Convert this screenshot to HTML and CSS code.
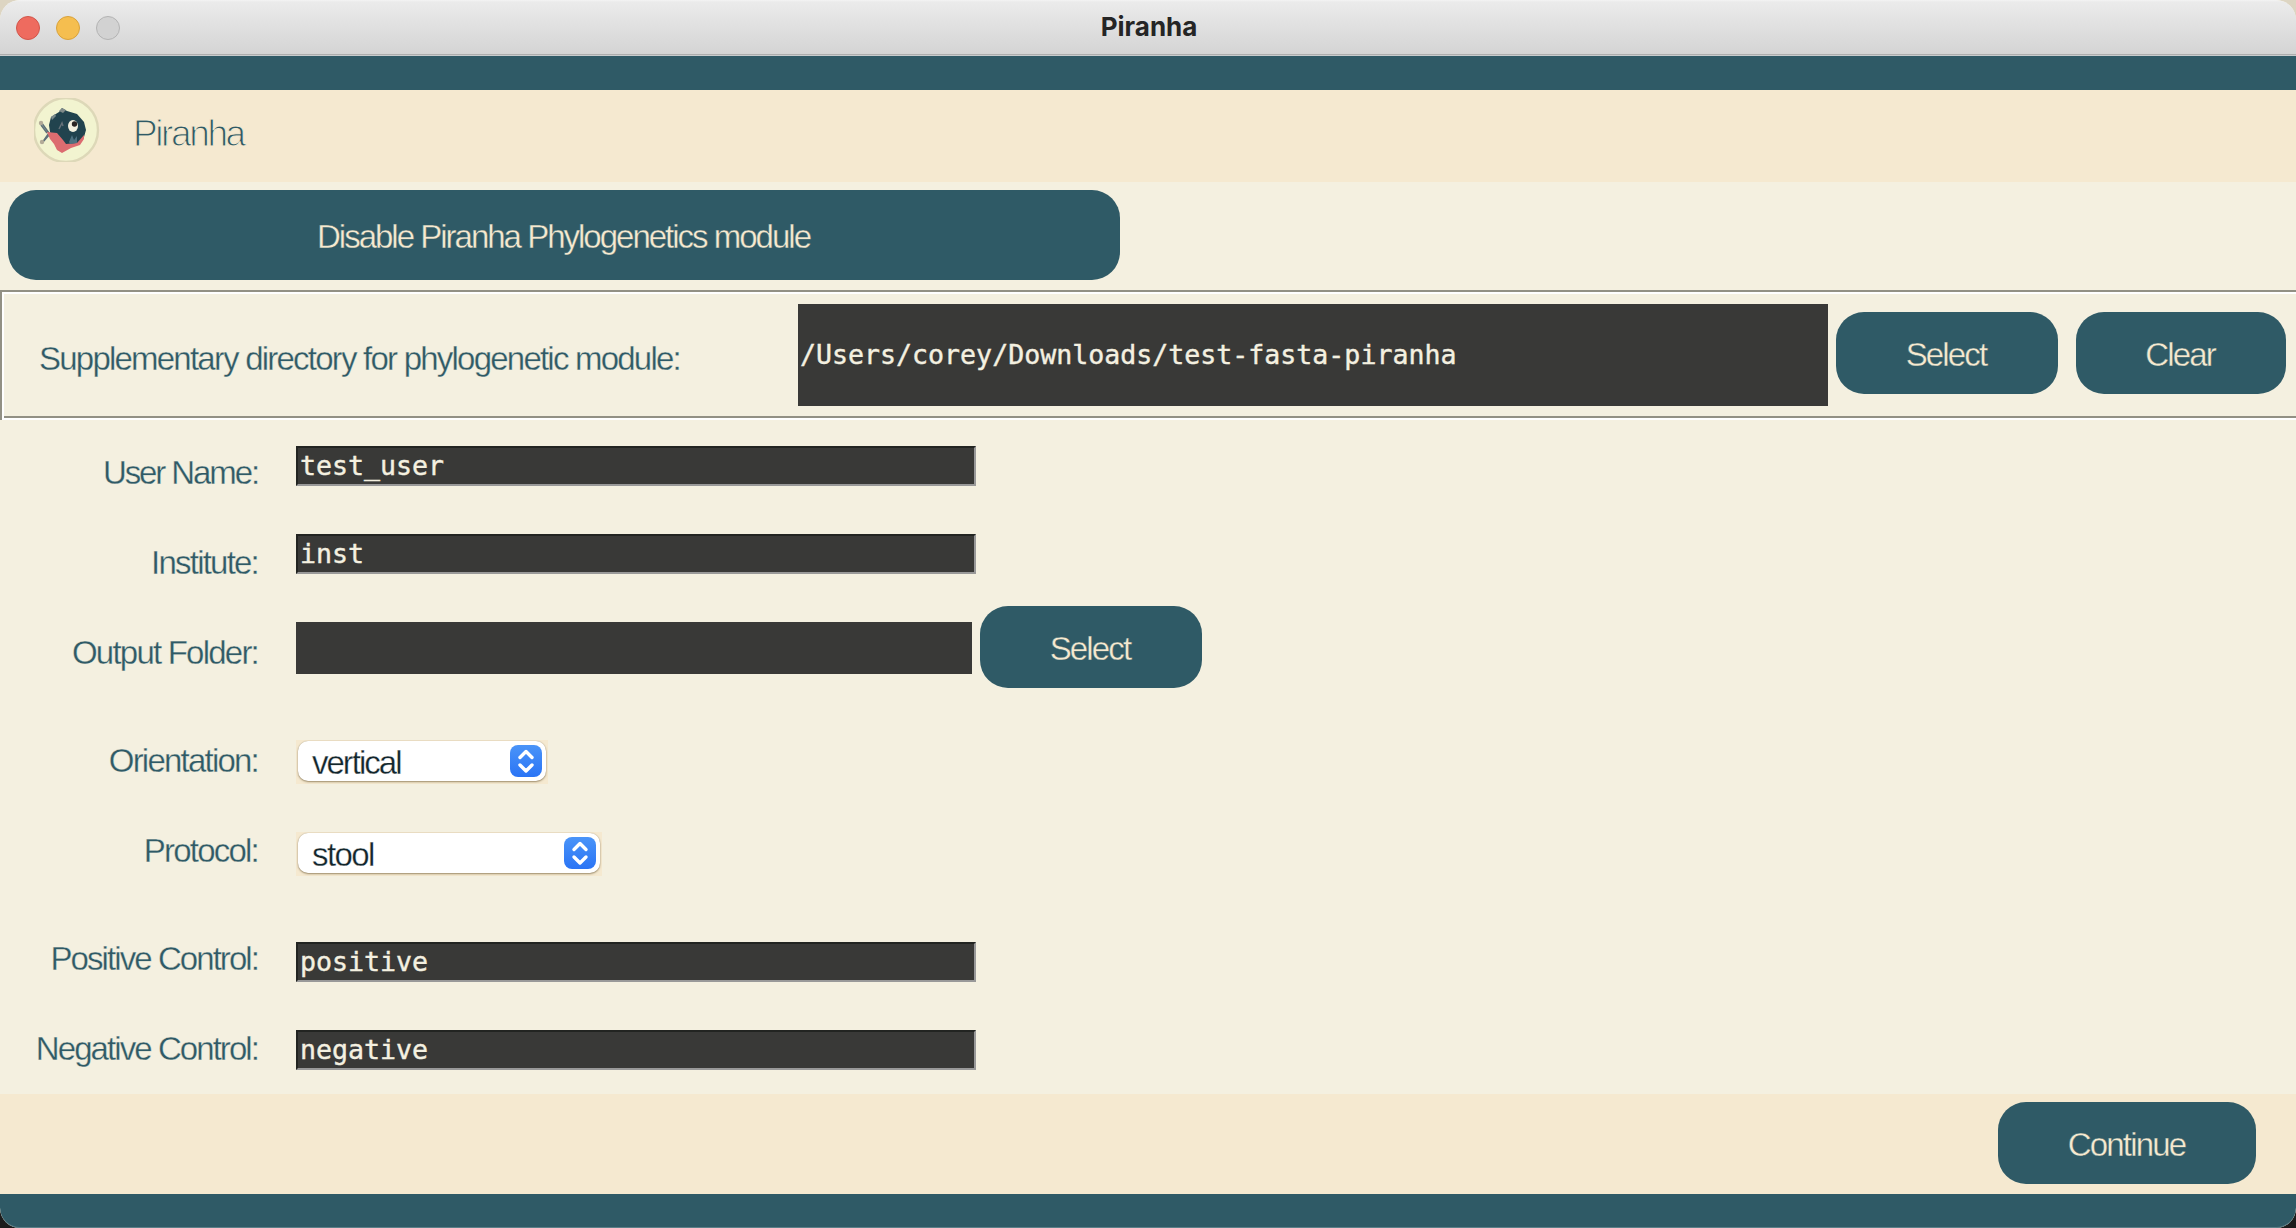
FILE: index.html
```
<!DOCTYPE html>
<html lang="en">
<head>
<meta charset="utf-8">
<title>Piranha</title>
<link rel="stylesheet" href="styles.css">
</head>
<body>
<div class="window">
  <div class="titlebar">
    <div class="lights">
      <span class="light light-close"></span>
      <span class="light light-min"></span>
      <span class="light light-zoom"></span>
    </div>
    <div class="window-title">Piranha</div>
    <div></div>
  </div>
  <div class="band"></div>
  <header class="header">
    <svg class="logo" width="66" height="64" viewBox="0 0 66 64">
      <circle cx="32" cy="32" r="32" fill="#f2f4d0" stroke="#ddd8b8" stroke-width="2.4"/>
      <path d="M7 24l8 11-7 10M7 27l6 8M8 45l8-9" fill="none" stroke="#5d7078" stroke-width="1.5"/>
      <circle cx="7" cy="25" r="2.2" fill="#b3ab98"/>
      <circle cx="8" cy="44" r="2.2" fill="#b3ab98"/>
      <path d="M17 19l8-5 3-4 5 3 10 3 7 8 2 8-2 7-5 6-14 3-12-7-3-7-1-7z" fill="#21434e"/>
      <path d="M25 13l3-3 4 2-3 3z" fill="#7f8a89"/>
      <path d="M17 19l4-3 1 2-4 4z" fill="#78898b"/>
      <path d="M13 34l10 1 6 7 3 4 11-1 7-8 0 4-4 6-9 3-9 5-5-3-3-6-4-5z" fill="#dc6c70"/>
      <path d="M35 44l3-7 2 5 3-4 0 7-7 1z" fill="#4e7180"/>
      <path d="M25 31l3-6 1 3" fill="none" stroke="#647078" stroke-width="1.5"/>
      <ellipse cx="39" cy="28" rx="5" ry="6" fill="#f3f1df"/>
      <circle cx="40.500" cy="26" r="2.700" fill="#2a2523"/>
    </svg>
    <h1 class="app-name">Piranha</h1>
  </header>
  <main class="content">
    <button class="btn btn-wide">Disable Piranha Phylogenetics module</button>
    <section class="frame">
      <div class="frame-inner">
        <span class="label frame-label">Supplementary directory for phylogenetic module:</span>
        <div class="path">/Users/corey/Downloads/test-fasta-piranha</div>
        <button class="btn btn-select">Select</button>
        <button class="btn btn-clear">Clear</button>
      </div>
    </section>
    <form class="form">
      <div class="row"><span class="label user-label">User Name:</span><div class="entry user">test_user</div></div>
      <div class="row"><span class="label">Institute:</span><div class="entry institute">inst</div></div>
      <div class="row group-end">
        <span class="label">Output Folder:</span>
        <div class="folder"><div class="folder-path"></div><button type="button" class="btn btn-select">Select</button></div>
      </div>
      <div class="row">
        <span class="label">Orientation:</span>
        <div class="menu menu-orientation"><div class="menu-box"><span class="menu-value">vertical</span>
          <svg class="stepper" width="32" height="32" viewBox="0 0 32 32"><path d="M10 12.500L16 6.500l6 6M10 20L16 26l6-6"/></svg></div></div>
      </div>
      <div class="row group-end">
        <span class="label">Protocol:</span>
        <div class="menu menu-protocol"><div class="menu-box"><span class="menu-value menu-value-short">stool</span>
          <svg class="stepper" width="32" height="32" viewBox="0 0 32 32"><path d="M10 12.500L16 6.500l6 6M10 20L16 26l6-6"/></svg></div></div>
      </div>
      <div class="row"><span class="label control-label">Positive Control:</span><div class="entry positive">positive</div></div>
      <div class="row"><span class="label control-label">Negative Control:</span><div class="entry negative">negative</div></div>
    </form>
  </main>
  <footer class="footer"><button class="btn btn-continue">Continue</button></footer>
  <div class="band band-bottom"></div>
</div>
</body>
</html>
```
FILE: styles.css
```
:root {
  --teal: #2f5a66;
  --cream: #f4f0e0;
  --beige: #f5e9d0;
  --field: #393937;
}
* { box-sizing: border-box; }
html { background: linear-gradient(#ddd5c2 50%, #1c1c1c 50%); }
body {
  margin: 0;
  font: 400 33px/36px "Liberation Sans", Arial, sans-serif;
  color: var(--teal);
}
.window {
  width: 2296px;
  height: 1228px;
  border-radius: 20px;
  overflow: hidden;
  background: var(--cream);
  display: flex;
  flex-direction: column;
}

/* title bar */
.titlebar {
  height: 56px;
  flex: none;
  display: grid;
  grid-template-columns: 1fr auto 1fr;
  align-items: center;
  background: linear-gradient(#f4f4f4 0, #ebebeb 2px, #d4d4d4 54px);
  border-bottom: 1px solid #c9cccd;
  box-shadow: inset 0 -1px #adadad;
}
.lights { display: flex; gap: 16px; padding-left: 16px; }
.light { width: 24px; height: 24px; border-radius: 50%; border: 1px solid; }
.light-close { background: #ee6b5f; border-color: #d1564b; }
.light-min { background: #f5be4f; border-color: #d8a23c; }
.light-zoom { background: #d2d2d2; border-color: #b3b3b3; }
.window-title { font: 700 26px/52px Inter, sans-serif; padding: 0 0 2px 2px; color: #252525; }

.band { height: 34px; flex: none; background: var(--teal); }
.band-bottom {
  border-radius: 0 0 20px 20px;
  box-shadow: inset 0 -1px #5c7f88;
}

/* header */
.header {
  height: 92px;
  flex: none;
  display: flex;
  align-items: flex-start;
  padding: 8px 0 0 34px;
  background: var(--beige);
}
.app-name {
  margin: 0 0 0 33px;
  font-size: 37px;
  font-weight: 400;
  line-height: 71px;
  letter-spacing: -2.4px;
  -webkit-text-stroke: 1.1px var(--beige);
}

/* buttons */
.btn {
  flex: none;
  height: 82px;
  border: 0;
  border-radius: 28px;
  padding: 4px 2px 0 0;
  background: var(--teal);
  color: var(--beige);
  font: inherit;
  letter-spacing: -1.85px;
  -webkit-text-stroke: .35px var(--teal);
}
.btn-wide { width: 1112px; height: 90px; margin: 8px 0 10px 8px; padding-right: 1px; letter-spacing: -2px; }
.btn-select { width: 222px; }
.btn-clear { width: 210px; margin-left: 18px; }
.btn-continue { width: 258px; padding-right: 1px; }

.content { flex: 1; display: flex; flex-direction: column; align-items: flex-start; }
.label { letter-spacing: -1.78px; -webkit-text-stroke: .3px var(--cream); white-space: nowrap; }
.control-label { letter-spacing: -1.93px; }
.user-label { letter-spacing: -2.1px; }

/* grooved frame */
.frame {
  width: 2296px;
  height: 130px;
  border: solid #929084;
  border-width: 2px 0 0 2px;
}
.frame-inner {
  height: 128px;
  border: 2px solid #fff;
  border-right: 0;
  display: flex;
  align-items: center;
  padding-bottom: 2px;
  box-shadow: inset 0 -2px #929084;
}
.frame-inner .btn { margin-bottom: 4px; }
.frame-label { width: 758px; padding: 8px 0 0 35px; }
.path {
  width: 1030px;
  height: 102px;
  margin: 0 8px 0 36px;
  padding-left: 2px;
  background: var(--field);
}
.path, .entry {
  color: var(--cream);
  font: 26.6px/36px "DejaVu Sans Mono", monospace;
  -webkit-text-stroke: .4px var(--cream);
}
.path { line-height: 101px; }

/* form rows */
.form { padding-top: 8px; }
.row { display: grid; grid-template-columns: 258px auto; column-gap: 38px; height: 90px; align-items: start; }
.row > .label { text-align: right; line-height: 90px; }
.group-end { margin-bottom: 18px; }
.entry {
  width: 680px;
  height: 40px;
  padding-left: 2px;
  border: 2px solid #222421;
  border-right-color: #999;
  border-bottom-color: #999;
  background: var(--field);
}
.user { margin-top: 18px; }
.institute { margin-top: 16px; }
.positive { margin-top: 28px; }
.negative { margin-top: 26px; }
.folder { display: flex; gap: 8px; margin-top: -2px; }
.folder-path { width: 676px; height: 52px; margin-top: 16px; background: var(--field); }

/* option menus */
.menu { height: 44px; padding: 1px 2px 3px; background: var(--beige); }
.menu-orientation { width: 252px; margin-top: 24px; }
.menu-protocol { width: 306px; margin-top: 26px; }
.menu-box {
  height: 40px;
  border-radius: 10px;
  background: #fff;
  box-shadow: 0 1px 2px rgba(90, 70, 30, .55), 0 0 1px rgba(90, 70, 30, .4);
  display: flex;
  justify-content: space-between;
  padding: 4px 4px 4px 14px;
  color: #12262c;
  line-height: 36px;
  -webkit-text-stroke: .3px #fff;
}
.menu-value { letter-spacing: -2px; }
.menu-value-short { letter-spacing: -1.6px; }
.stepper { border-radius: 8px; background: linear-gradient(#4a94f8, #2a74f5); }
.stepper path { fill: none; stroke: #fff; stroke-width: 3.4; stroke-linecap: round; stroke-linejoin: round; }

.footer {
  height: 100px;
  flex: none;
  display: flex;
  justify-content: flex-end;
  padding: 8px 40px 0 0;
  background: var(--beige);
}
```
